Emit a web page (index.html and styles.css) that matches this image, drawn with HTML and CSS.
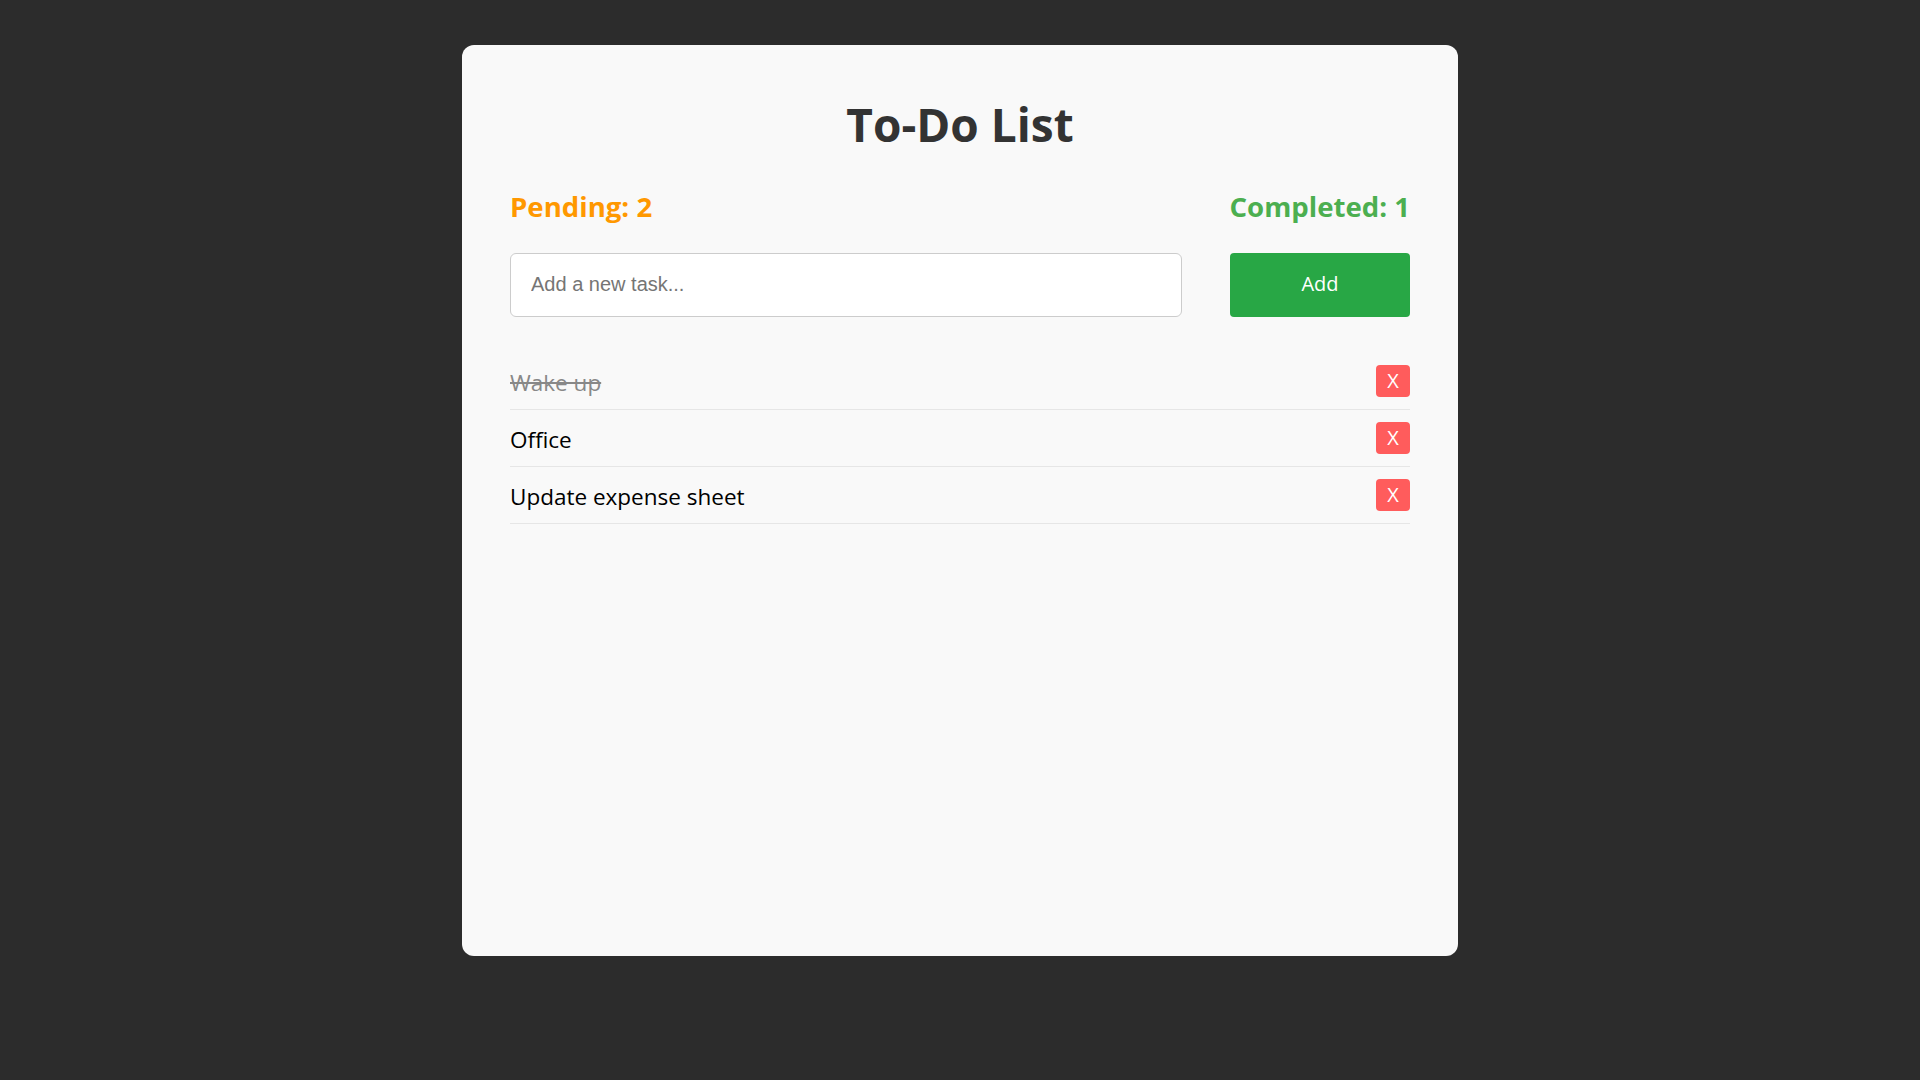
FILE: index.html
```html
<!DOCTYPE html>
<html lang="en">
<head>
<meta charset="utf-8">
<title>To-Do List</title>
<link rel="stylesheet" href="styles.css">
</head>
<body>
  <main class="card">
    <h1 class="title">To-Do List</h1>
    <div class="stats">
      <span class="stat stat-pending">Pending: 2</span>
      <span class="stat stat-completed">Completed: 1</span>
    </div>
    <form class="add-row">
      <input class="task-input" type="text" placeholder="Add a new task...">
      <button class="add-btn" type="button">Add</button>
    </form>
    <ul class="task-list">
      <li class="task">
        <span class="task-text done">Wake up</span>
        <button class="del-btn" type="button">X</button>
      </li>
      <li class="task">
        <span class="task-text">Office</span>
        <button class="del-btn" type="button">X</button>
      </li>
      <li class="task">
        <span class="task-text">Update expense sheet</span>
        <button class="del-btn" type="button">X</button>
      </li>
    </ul>
  </main>
</body>
</html>
```
FILE: styles.css
```css
* { box-sizing: border-box; }

html, body {
  margin: 0;
  padding: 0;
  background: #2c2c2c;
}

body {
  font-family: "Open Sans", "Noto Sans", sans-serif;
  min-height: 1080px;
}

.card {
  width: 996px;
  height: 911px;
  margin: 45px auto 0;
  padding: 0 48px;
  background: #f9f9f9;
  border-radius: 12px;
  display: flex;
  flex-direction: column;
}

.title {
  margin: 50px 0 0;
  font-size: 46px;
  line-height: 58px;
  font-weight: 700;
  color: #333333;
  text-align: center;
}

.stats {
  margin-top: 35px;
  display: flex;
  justify-content: space-between;
  align-items: center;
  height: 36px;
}

.stat {
  font-size: 27.6px;
  line-height: 36px;
  font-weight: 700;
}

.stat-pending { color: #ff9800; }
.stat-completed { color: #4caf50; }

.add-row {
  margin: 29px 0 0;
  display: flex;
  gap: 48px;
  height: 64px;
}

.task-input {
  flex: 1;
  height: 64px;
  border: 1px solid #cccccc;
  border-radius: 6px;
  background: #ffffff;
  padding: 0 20px 2px;
  font-family: "Liberation Sans", Arial, sans-serif;
  font-size: 20px;
  color: #333;
  outline: none;
}

.task-input::placeholder {
  color: #757575;
}

.add-btn {
  width: 180px;
  height: 64px;
  border: none;
  border-radius: 4px;
  background: #28a745;
  color: #ffffff;
  font-family: "Open Sans", "Noto Sans", sans-serif;
  font-size: 20px;
  padding: 0 0 4px;
  cursor: pointer;
}

.task-list {
  list-style: none;
  margin: 36px 0 0;
  padding: 0;
}

.task {
  display: flex;
  justify-content: space-between;
  align-items: center;
  height: 57px;
  padding: 12px 0;
  border-bottom: 1px solid #e6e6e6;
}

.task-text {
  font-size: 22.5px;
  line-height: 24px;
  padding-top: 4px;
  color: #000000;
}

.task-text.done {
  color: #888888;
  text-decoration: line-through;
}

.del-btn {
  width: 34px;
  height: 32px;
  border: none;
  border-radius: 4px;
  background: #ff5c5c;
  color: #ffffff;
  font-family: "Open Sans", "Noto Sans", sans-serif;
  font-size: 20px;
  line-height: 32px;
  padding: 0;
  cursor: pointer;
}
```
